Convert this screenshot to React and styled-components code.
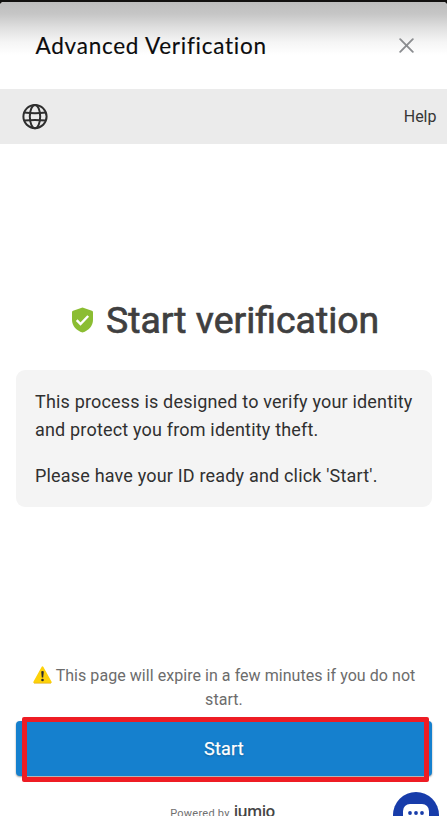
import React from 'react'
import styled, { createGlobalStyle } from 'styled-components'

const GlobalStyle = createGlobalStyle`
    * {
        box-sizing: border-box;
    }

    body {
        margin: 0;
        background-color: #fff;
        font-family: Roboto, "Liberation Sans", sans-serif;
        overflow: hidden;
    }
`;

const Screen = styled.div`
    height: 816px;
    width: 447px;
    display: flex;
    flex-flow: column nowrap;
    background-color: #11100f;
    padding-top: 2px;
    position: relative;
    overflow: hidden;
`;

const Sheet = styled.div`
    flex: 1;
    min-height: 0;
    display: flex;
    flex-flow: column nowrap;
    background-color: #fff;
    border-radius: 4px 4px 0px 0px;
    overflow: hidden;
`;

const Header = styled.header`
    height: 87px;
    flex: none;
    display: flex;
    justify-content: space-between;
    padding: 29px 33px 0px 35.5px;
    background: linear-gradient(#bdbdbd 0px, #c6c6c6 12px, #dedede 25px, #f5f5f5 40px, #fff 53px);
`;

const HeaderTitle = styled.h1`
    margin: 0;
    font: 400 22.5px/29px Lato, sans-serif;
    letter-spacing: 0.75px;
    color: #0c0c0d;
    -webkit-text-stroke: 0.15px #0c0c0d;
    white-space: nowrap;
`;

const CloseButton = styled.button`
    border: none;
    background-color: transparent;
    height: 28px;
    padding: 0;
    display: flex;
    align-items: center;
`;

const Toolbar = styled.nav`
    height: 55px;
    flex: none;
    display: flex;
    align-items: center;
    justify-content: space-between;
    padding: 0px 10.5px 0px 22px;
    background-color: #ebebeb;
`;

const HelpLink = styled.a`
    font-size: 16px;
    line-height: 20px;
    color: #363636;
`;

const Content = styled.main`
    flex: 1;
    min-height: 0;
    display: flex;
    flex-flow: column nowrap;
    padding: 154px 15px 0px 16px;
`;

const Heading = styled.h2`
    margin: 0;
    height: 44px;
    display: flex;
    align-items: center;
    padding-left: 55px;
    gap: 11px;
    font-weight: 400;
    font-size: 37.4px;
    color: #3f3f40;
    -webkit-text-stroke: 0.7px #3f3f40;
    white-space: nowrap;
`;

const InfoCard = styled.section`
    height: 137px;
    margin-top: 28px;
    padding: 18px 19px;
    border-radius: 9px;
    background-color: #f4f4f4;
`;

const InfoText = styled.p`
    margin: 0px 0px 18px;
    font-size: 18px;
    line-height: 28px;
    letter-spacing: 0.18px;
    color: #303030;
    white-space: nowrap;
`;

const Notice = styled.p`
    margin: 157px 0px 0px;
    font-size: 16px;
    line-height: 24px;
    letter-spacing: 0.05px;
    text-align: center;
    color: #6c6c6c;
    white-space: nowrap;

    svg {
        vertical-align: -3px;
        margin-right: 4px;
    }
`;

const ActionWrap = styled.div`
    margin-top: 9px;
    position: relative;
`;

const StartButton = styled.button`
    display: block;
    width: 100%;
    height: 55px;
    padding: 0;
    border: none;
    border-radius: 4px;
    background-color: #1580ce;
    box-shadow: 0 1px 2px rgba(0, 0, 0, 0.4);
    color: #fff;
    font: 400 18px/24px Roboto, sans-serif;
    -webkit-text-stroke: 0.25px #fff;
    letter-spacing: 0.2px;
    text-shadow: 0 1px 2px rgba(0, 0, 0, 0.3);
`;

const Highlight = styled.div`
    position: absolute;
    top: -4px;
    left: 6px;
    right: 3px;
    height: 65px;
    border: 5px solid #ee1c24;
    border-radius: 2px;
`;

const PoweredBy = styled.footer`
    margin-top: 26px;
    display: flex;
    align-items: baseline;
    justify-content: center;
    gap: 4px;
    padding-right: 3px;
    font-size: 11px;
    line-height: 18px;
    letter-spacing: 0.25px;
    color: #707070;
`;

const Brand = styled.span`
    font: 600 16px/18px "Open Sans", sans-serif;
    letter-spacing: -0.6px;
    color: #454545;
`;

const ChatButton = styled.button`
    position: absolute;
    left: 393px;
    top: 792px;
    width: 46px;
    height: 46px;
    padding: 0;
    border: none;
    border-radius: 50%;
    background-color: #173caa;
`;

const CloseIcon = () => (
    <svg width="15" height="15" viewBox="0 0 15 15" fill="none" stroke="#8b8d90" strokeWidth="1.9" strokeLinecap="round">
        <path d="M1.2 1.2 13.8 13.8M13.8 1.2 1.2 13.8" />
    </svg>
)

const GlobeIcon = () => (
    <svg width="26" height="26" viewBox="0 0 26 26" fill="none" stroke="#2e2e2e" strokeWidth="2">
        <circle cx="13" cy="12.6" r="11.6" />
        <ellipse cx="13" cy="12.6" rx="5.2" ry="11.6" />
        <path d="M2.2 8.6Q13 10 23.8 8.6M2.2 16.6Q13 15.2 23.8 16.6" />
    </svg>
)

const ShieldIcon = () => (
    <svg width="24" height="26" viewBox="0 0 24 26">
        <path d="M11.5 .4 20.9 3.7Q22 4.1 22 5.3V12.7C22 18.8 17.7 23.7 11.5 25.4 5.3 23.7 1 18.8 1 12.7V5.3Q1 4.1 2.1 3.7Z" fill="#8bbd32" />
        <path d="M5.7 13.2 9.5 17 17.2 9" fill="none" stroke="#fff" strokeWidth="2.4" />
    </svg>
)

const WarningIcon = () => (
    <svg width="19" height="18" viewBox="0 0 19 18">
        <path d="M9.5 1.2 17.8 16.2H1.2Z" fill="#fdd20a" stroke="#fdd20a" strokeWidth="1.8" strokeLinejoin="round" />
        <path d="M1 17.2H18" stroke="#e5ad16" strokeWidth=".8" />
        <path d="M8.2 5.4Q9.5 4.4 10.8 5.4L10.2 11.6H8.8Z" fill="#292b30" />
        <circle cx="9.5" cy="14" r="1.3" fill="#292b30" />
    </svg>
)

const ChatIcon = () => (
    <svg width="46" height="46" viewBox="0 0 46 46" style={{ display: 'block' }}>
        <rect x="10" y="12" width="26" height="21" rx="7" fill="#fff" />
        <circle cx="17" cy="21" r="1.9" fill="#173caa" />
        <circle cx="23" cy="21" r="1.9" fill="#173caa" />
        <circle cx="29" cy="21" r="1.9" fill="#173caa" />
    </svg>
)

function App() {
    return (
        <>
            <GlobalStyle />
            <Screen>
                <Sheet>
                    <Header>
                        <HeaderTitle>Advanced Verification</HeaderTitle>
                        <CloseButton aria-label="Close"><CloseIcon /></CloseButton>
                    </Header>
                    <Toolbar>
                        <GlobeIcon />
                        <HelpLink>Help</HelpLink>
                    </Toolbar>
                    <Content>
                        <Heading>
                            <ShieldIcon />
                            <span>Start verification</span>
                        </Heading>
                        <InfoCard>
                            <InfoText>
                                This process is designed to verify your identity<br />
                                and protect you from identity theft.
                            </InfoText>
                            <InfoText>Please have your ID ready and click 'Start'.</InfoText>
                        </InfoCard>
                        <Notice>
                            <WarningIcon />
                            This page will expire in a few minutes if you do not<br />
                            start.
                        </Notice>
                        <ActionWrap>
                            <StartButton>Start</StartButton>
                            <Highlight />
                        </ActionWrap>
                        <PoweredBy>
                            Powered by <Brand>jumio</Brand>
                        </PoweredBy>
                    </Content>
                </Sheet>
                <ChatButton aria-label="Chat"><ChatIcon /></ChatButton>
            </Screen>
        </>
    )
}

export default App
